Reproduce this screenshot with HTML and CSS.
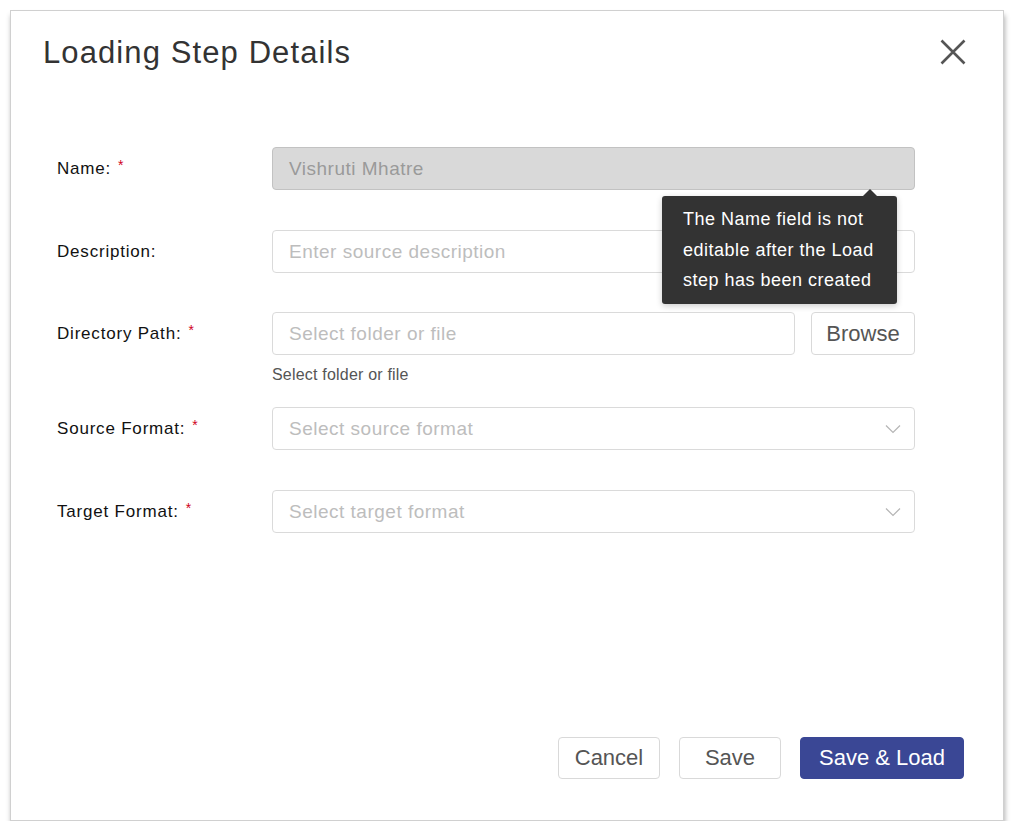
FILE: index.html
```html
<!DOCTYPE html>
<html lang="en">
<head>
<meta charset="utf-8">
<title>Loading Step Details</title>
<link rel="stylesheet" href="styles.css">
</head>
<body>
<div class="modal">
  <div class="modal-header">
    <h1 class="modal-title">Loading Step Details</h1>
    <button class="close-btn" aria-label="Close">
      <svg width="26" height="26" viewBox="0 0 26 26"><path d="M1.5 1.5 L24.5 24.5 M24.5 1.5 L1.5 24.5" stroke="#555" stroke-width="2.6" fill="none" stroke-linecap="butt"/></svg>
    </button>
  </div>

  <div class="form">
    <div class="row">
      <label class="label">Name:<span class="req">*</span></label>
      <div class="field has-tip">
        <div class="input disabled">Vishruti Mhatre</div>
        <div class="tooltip">The Name field is not<br>editable after the Load<br>step has been created</div>
      </div>
    </div>

    <div class="row row-desc">
      <label class="label">Description:</label>
      <div class="field">
        <div class="input placeholder">Enter source description</div>
      </div>
    </div>

    <div class="row row-tight">
      <label class="label">Directory Path:<span class="req">*</span></label>
      <div class="field">
        <div class="inline">
          <div class="input placeholder grow">Select folder or file</div>
          <button class="btn browse">Browse</button>
        </div>
        <div class="help">Select folder or file</div>
      </div>
    </div>

    <div class="row">
      <label class="label">Source Format:<span class="req">*</span></label>
      <div class="field">
        <div class="input placeholder select">Select source format
          <svg class="chev" width="16" height="10" viewBox="0 0 16 10"><path d="M1 1.5 L8 8.5 L15 1.5" stroke="#b5b5b5" stroke-width="1.2" fill="none"/></svg>
        </div>
      </div>
    </div>

    <div class="row">
      <label class="label">Target Format:<span class="req">*</span></label>
      <div class="field">
        <div class="input placeholder select">Select target format
          <svg class="chev" width="16" height="10" viewBox="0 0 16 10"><path d="M1 1.5 L8 8.5 L15 1.5" stroke="#b5b5b5" stroke-width="1.2" fill="none"/></svg>
        </div>
      </div>
    </div>
  </div>

  <div class="footer">
    <button class="btn">Cancel</button>
    <button class="btn">Save</button>
    <button class="btn primary">Save &amp; Load</button>
  </div>
</div>
</body>
</html>
```

FILE: styles.css
```css
* { box-sizing: border-box; }

html, body {
  margin: 0;
  padding: 0;
  background: #ffffff;
}

body {
  padding: 10px 0 0 10px;
  font-family: "Liberation Sans", Arial, Helvetica, sans-serif;
  color: #111;
}

.modal {
  width: 994px;
  height: 811px;
  background: #fff;
  border: 1px solid #d0d0d0;
  box-shadow: 1px 5px 5px rgba(0, 0, 0, 0.3);
  display: flex;
  flex-direction: column;
}

.modal-header {
  display: flex;
  justify-content: space-between;
  align-items: flex-start;
  padding: 24px 37px 0 32px;
}

.modal-title {
  margin: 0;
  font-size: 31px;
  line-height: 36px;
  font-weight: normal;
  letter-spacing: 1.1px;
  color: #333;
}

.close-btn {
  border: 0;
  background: none;
  padding: 0;
  margin-top: 4px;
  width: 26px;
  height: 26px;
  cursor: pointer;
}
.close-btn svg { display: block; }

.form {
  margin-top: 76px;
  padding: 0 88px 0 46px;
  display: flex;
  flex-direction: column;
}

.row {
  display: grid;
  grid-template-columns: 215px 1fr;
  align-items: start;
  margin-bottom: 40px;
}
.row-desc { margin-bottom: 39px; }
.row-tight { margin-bottom: 21px; }

.label {
  height: 43px;
  display: flex;
  align-items: center;
  font-size: 17px;
  letter-spacing: 0.8px;
  color: #111;
  white-space: nowrap;
}

.req {
  color: #d0021b;
  font-size: 14px;
  line-height: 1;
  margin-left: 7px;
  align-self: center;
  position: relative;
  top: -4px;
}

.field { position: relative; }

.input {
  height: 43px;
  border: 1px solid #dadada;
  border-radius: 4px;
  padding: 0 16px;
  display: flex;
  align-items: center;
  font-size: 19px;
  letter-spacing: 0.5px;
  color: #333;
  background: #fff;
}
.input.placeholder { color: #bdbdbd; }
.input.disabled {
  background: #d9d9d9;
  border-color: #c2c2c2;
  color: #9a9a9a;
}
.input.select { justify-content: space-between; padding-right: 13px; }
.chev { display: block; }

.inline {
  display: flex;
  gap: 16px;
}
.grow { flex: 1; }

.help {
  margin-top: 9px;
  line-height: 22px;
  font-size: 16px;
  letter-spacing: 0.2px;
  color: #555;
}

.btn {
  font-family: "Liberation Sans", Arial, Helvetica, sans-serif;
  height: 42px;
  border: 1px solid #d9d9d9;
  border-radius: 4px;
  background: #fff;
  color: #555;
  font-size: 22px;
  padding: 0;
  cursor: pointer;
}

.browse {
  width: 104px;
  height: 43px;
}

.tooltip {
  position: absolute;
  left: 390px;
  top: 49px;
  width: 235px;
  padding: 8px 0 8px 21px;
  background: #333;
  border-radius: 3px;
  color: #fff;
  font-size: 18px;
  line-height: 30.5px;
  letter-spacing: 0.5px;
  box-shadow: 0 2px 6px rgba(0, 0, 0, 0.2);
  white-space: nowrap;
  z-index: 2;
}
.tooltip::before {
  content: "";
  position: absolute;
  top: -7px;
  left: 201px;
  border-left: 7px solid transparent;
  border-right: 7px solid transparent;
  border-bottom: 7px solid #333;
}

.footer {
  margin-top: auto;
  display: flex;
  justify-content: flex-end;
  gap: 19px;
  padding: 0 39px 41px 0;
}
.footer .btn { width: 102px; }
.footer .btn.primary {
  width: 164px;
  background: #3a4795;
  border-color: #3a4795;
  color: #fff;
}
```
